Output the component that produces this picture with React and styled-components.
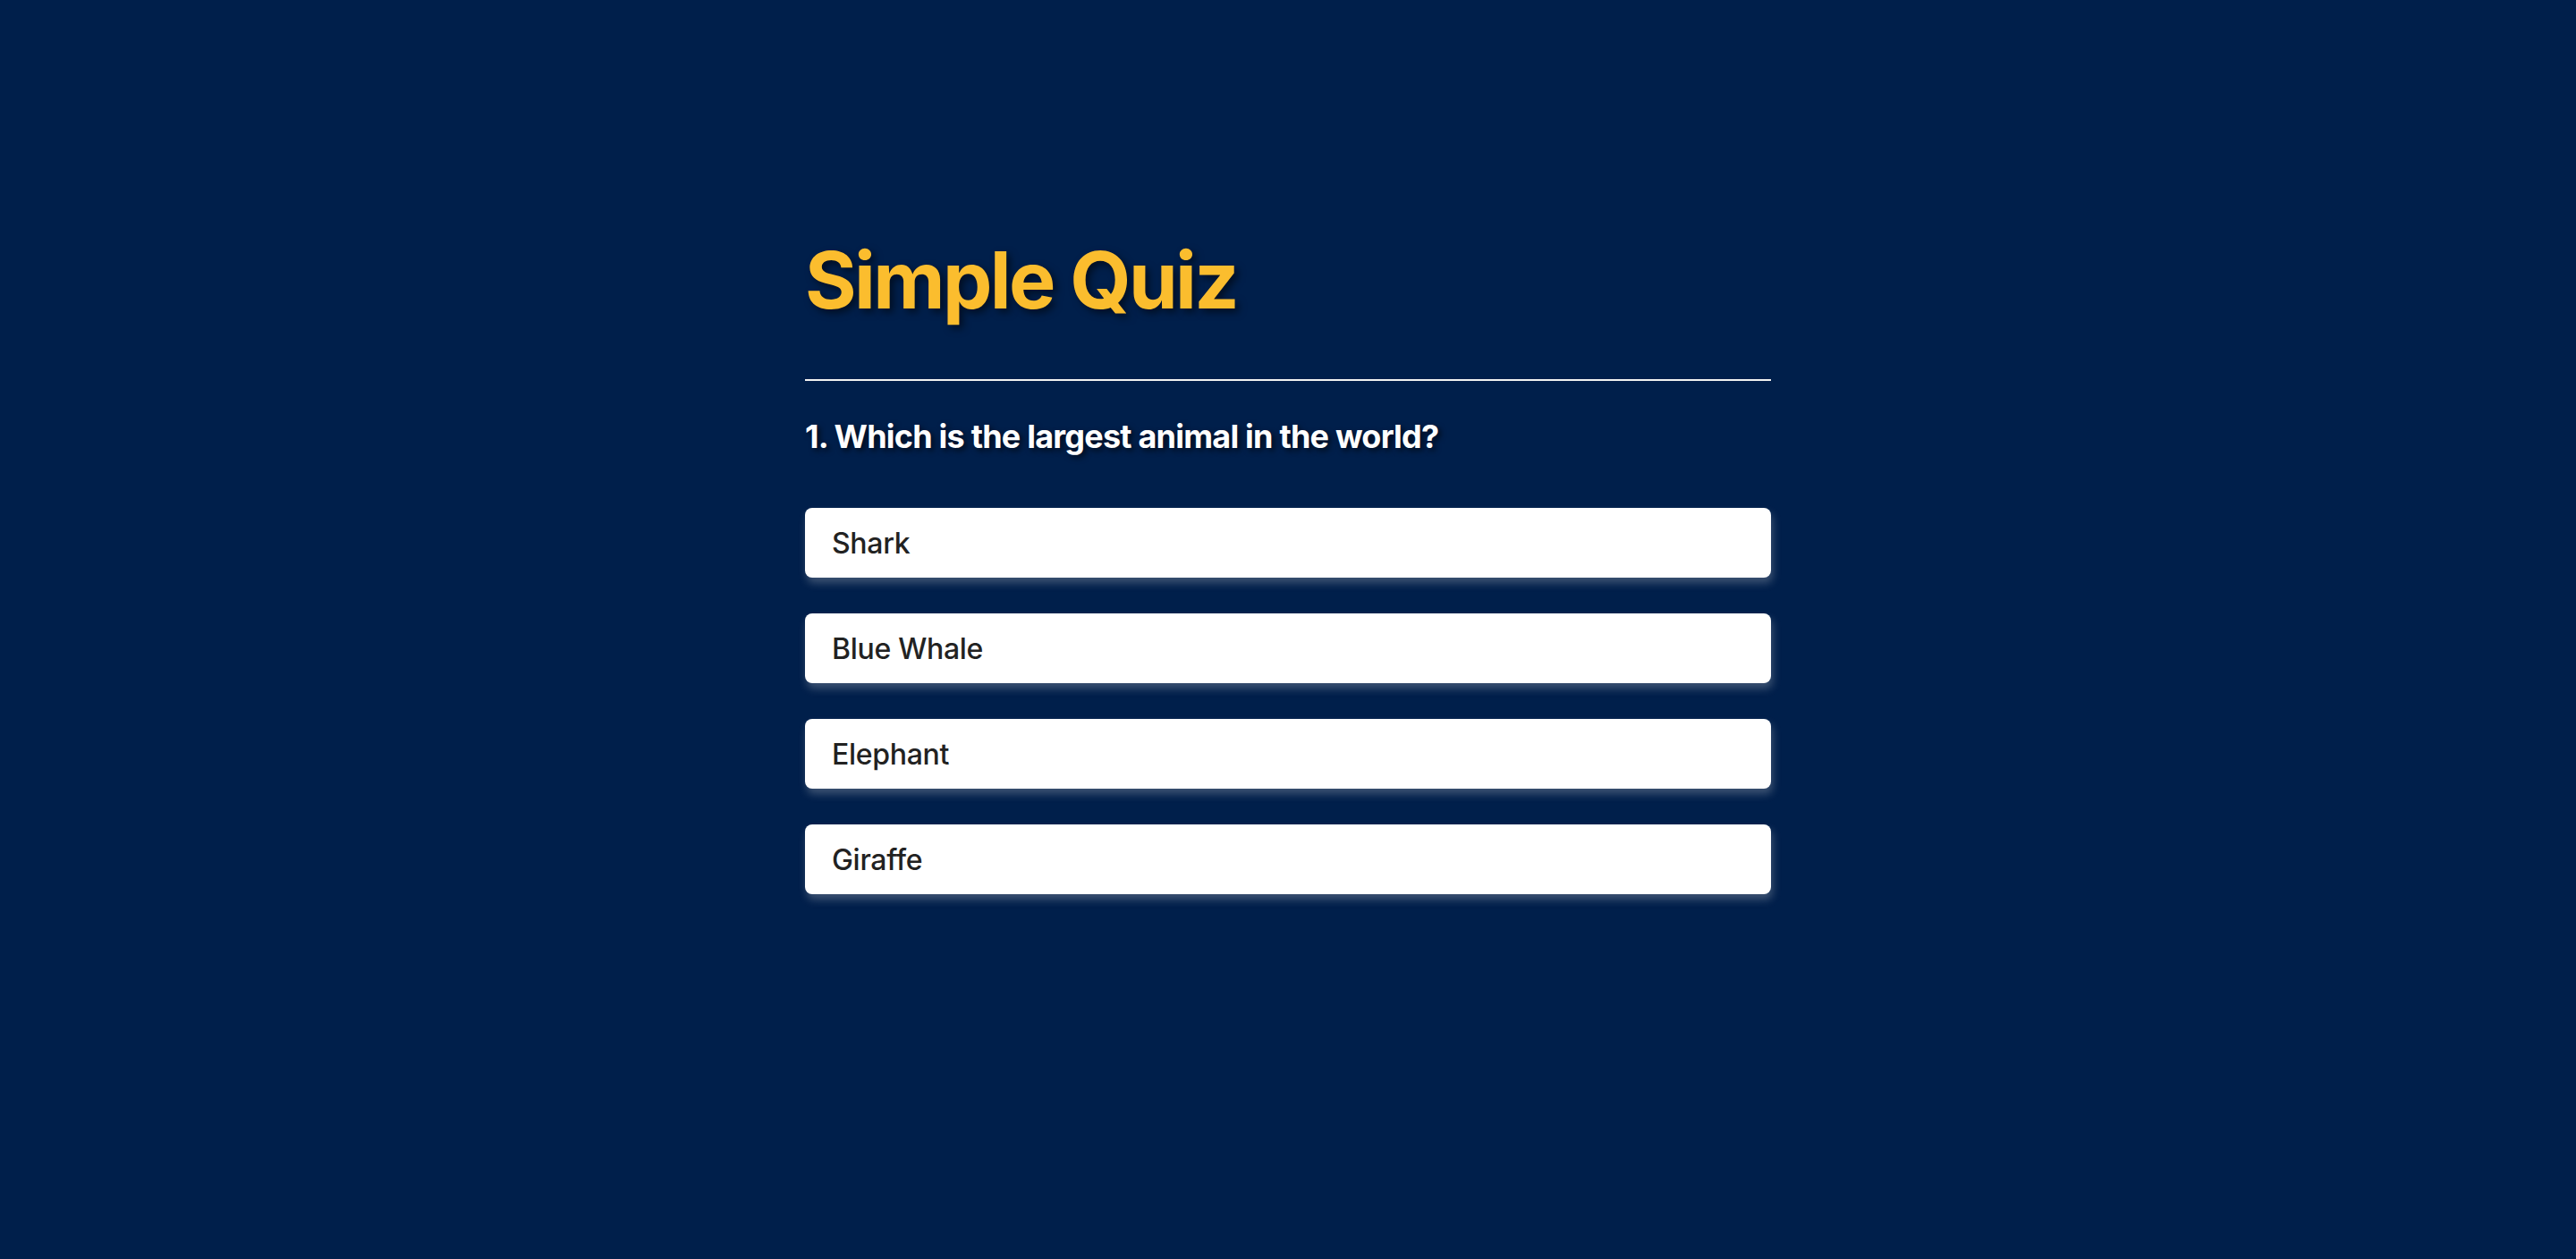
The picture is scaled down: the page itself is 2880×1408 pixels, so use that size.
import styled, { createGlobalStyle } from 'styled-components'
import { useState } from 'react'

const GlobalStyle = createGlobalStyle`
  html, body {
    margin: 0;
    padding: 0;
    background: #001f4b;
  }
  body {
    min-height: 100vh;
    font-family: Inter, "Noto Sans", sans-serif;
  }
`

const Page = styled.main`
  min-height: 100vh;
  background: #001f4b;
  padding-top: 260px;
  box-sizing: border-box;
`

const Quiz = styled.section`
  width: 1080px;
  margin: 0 auto;
`

const Title = styled.h1`
  margin: 0;
  font-size: 88px;
  line-height: 106px;
  font-weight: 700;
  color: #fbbd2e;
  letter-spacing: -2.6px;
  text-shadow: 4px 4px 8px rgba(0, 0, 0, 0.55);
`

const Divider = styled.hr`
  margin: 58px 0 0;
  border: 0;
  height: 2px;
  background: #f2f2f2;
`

const Question = styled.h2`
  margin: 40px 0 0;
  font-size: 36px;
  line-height: 44px;
  font-weight: 700;
  letter-spacing: -0.78px;
  color: #ffffff;
  text-shadow: 3px 3px 6px rgba(0, 0, 0, 0.65);
`

const Answers = styled.div`
  display: flex;
  flex-direction: column;
  gap: 40px;
  margin-top: 58px;
`

const Answer = styled.button`
  display: flex;
  align-items: center;
  height: 78px;
  padding: 0 30px;
  border: 0;
  border-radius: 8px;
  background: ${({ $picked }) => ($picked ? '#e8eefc' : '#ffffff')};
  color: #222222;
  font-family: Inter, "Noto Sans", sans-serif;
  font-size: 32px;
  font-weight: 500;
  letter-spacing: -0.3px;
  text-align: left;
  cursor: pointer;
  box-shadow: 2px 6px 10px rgba(220, 220, 220, 0.28);
`

const options = ['Shark', 'Blue Whale', 'Elephant', 'Giraffe']

export default function App() {
  const [picked, setPicked] = useState(null)

  return (
    <Page>
      <GlobalStyle />
      <Quiz>
        <Title>Simple Quiz</Title>
        <Divider />
        <Question>1. Which is the largest animal in the world?</Question>
        <Answers>
          {options.map((option) => (
            <Answer
              key={option}
              $picked={picked === option}
              onClick={() => setPicked(option)}
            >
              {option}
            </Answer>
          ))}
        </Answers>
      </Quiz>
    </Page>
  )
}
